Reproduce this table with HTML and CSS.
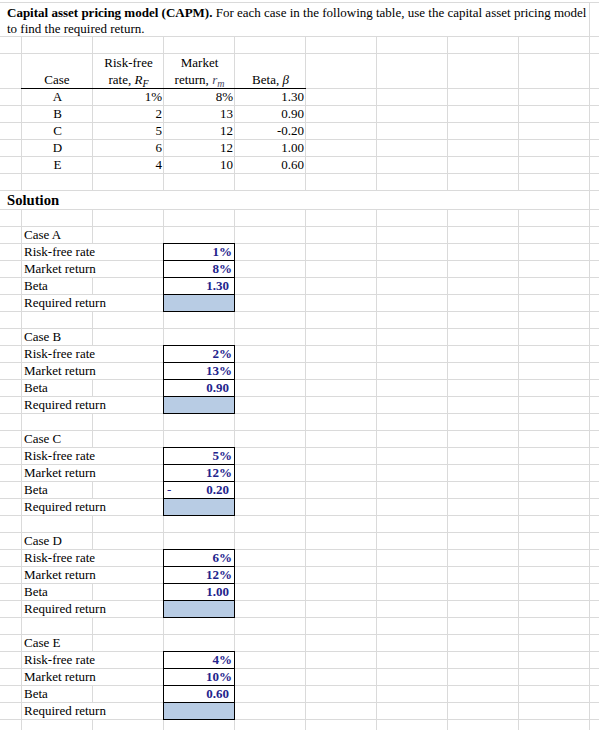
FILE: index.html
```html
<!DOCTYPE html>
<html>
<head>
<meta charset="utf-8">
<title>CAPM</title>
<link rel="stylesheet" href="styles.css">
</head>
<body>
<div class="sheet">
  <div class="row merged title">
    <div class="ttl"><b>Capital asset pricing model (CAPM).</b> For each case in the following table, use the capital asset pricing model<br>to find the required return.</div>
  </div>
  <div class="row"></div>
  <div class="row head">
    <div class="h c2 first">Case</div>
    <div class="h c3">Risk-free<br>rate, <i>R</i><sub>F</sub></div>
    <div class="h c4">Market<br>return, <i class="rm">r</i><sub class="rm">m</sub></div>
    <div class="h c5">Beta, <i>β</i></div>
  </div>
  <div class="row"><div class="d c2 ctr">A</div><div class="d c3 num">1%</div><div class="d c4 num">8%</div><div class="d c5 num">1.30</div></div>
  <div class="row"><div class="d c2 ctr">B</div><div class="d c3 num">2</div><div class="d c4 num">13</div><div class="d c5 num">0.90</div></div>
  <div class="row"><div class="d c2 ctr">C</div><div class="d c3 num">5</div><div class="d c4 num">12</div><div class="d c5 num">-0.20</div></div>
  <div class="row"><div class="d c2 ctr">D</div><div class="d c3 num">6</div><div class="d c4 num">12</div><div class="d c5 num">1.00</div></div>
  <div class="row"><div class="d c2 ctr">E</div><div class="d c3 num">4</div><div class="d c4 num">10</div><div class="d c5 num">0.60</div></div>
  <div class="row"></div>
  <div class="row merged solrow"><div class="sol">Solution</div></div>
  <div class="row"></div>

  <div class="row"><div class="lbl">Case A</div></div>
  <div class="row"><div class="lbl ov">Risk-free rate</div><div class="box">1%</div></div>
  <div class="row"><div class="lbl ov">Market return</div><div class="box">8%</div></div>
  <div class="row"><div class="lbl">Beta</div><div class="box beta">1.30</div></div>
  <div class="row"><div class="lbl ov">Required return</div><div class="box fill"></div></div>
  <div class="row"></div>

  <div class="row"><div class="lbl">Case B</div></div>
  <div class="row"><div class="lbl ov">Risk-free rate</div><div class="box">2%</div></div>
  <div class="row"><div class="lbl ov">Market return</div><div class="box">13%</div></div>
  <div class="row"><div class="lbl">Beta</div><div class="box beta">0.90</div></div>
  <div class="row"><div class="lbl ov">Required return</div><div class="box fill"></div></div>
  <div class="row"></div>

  <div class="row"><div class="lbl">Case C</div></div>
  <div class="row"><div class="lbl ov">Risk-free rate</div><div class="box">5%</div></div>
  <div class="row"><div class="lbl ov">Market return</div><div class="box">12%</div></div>
  <div class="row"><div class="lbl">Beta</div><div class="box beta neg"><span class="minus">-</span><span>0.20</span></div></div>
  <div class="row"><div class="lbl ov">Required return</div><div class="box fill"></div></div>
  <div class="row"></div>

  <div class="row"><div class="lbl">Case D</div></div>
  <div class="row"><div class="lbl ov">Risk-free rate</div><div class="box">6%</div></div>
  <div class="row"><div class="lbl ov">Market return</div><div class="box">12%</div></div>
  <div class="row"><div class="lbl">Beta</div><div class="box beta">1.00</div></div>
  <div class="row"><div class="lbl ov">Required return</div><div class="box fill"></div></div>
  <div class="row"></div>

  <div class="row"><div class="lbl">Case E</div></div>
  <div class="row"><div class="lbl ov">Risk-free rate</div><div class="box">4%</div></div>
  <div class="row"><div class="lbl ov">Market return</div><div class="box">10%</div></div>
  <div class="row"><div class="lbl">Beta</div><div class="box beta">0.60</div></div>
  <div class="row"><div class="lbl ov">Required return</div><div class="box fill"></div></div>
  <div class="row"></div>
  <div class="row"></div>
</div>
</body>
</html>
```

FILE: styles.css
```css
* { box-sizing: border-box; }
html, body { margin: 0; padding: 0; background: #fff; }
body {
  font-family: "Liberation Serif", "Times New Roman", serif;
  font-size: 13px;
  color: #000;
}
.sheet {
  width: 599px;
  margin-top: 2px;
  border-top: 1px solid #dadada;
  overflow: hidden;
}
.row {
  display: grid;
  grid-template-columns: 22px repeat(8, 71px) 1fr;
  height: 17px;
  line-height: 16px;
  border-bottom: 1px solid #dadada;
  background-image: linear-gradient(to right, transparent 70px, #dadada 70px);
  background-size: 71px 100%;
  background-position: 22px 0;
  background-repeat: repeat-x;
}
.row.merged {
  background-image: linear-gradient(#dadada, #dadada);
  background-size: 1px 100%;
  background-position: 589px 0;
  background-repeat: no-repeat;
}
.title { height: 34px; }
.ttl {
  grid-column: 1 / 10;
  padding: 2px 0 0 7px;
  line-height: 16px;
  white-space: nowrap;
}
.head { height: 35px; }
.h {
  align-self: end;
  text-align: center;
  line-height: 17px;
  border-bottom: 1px solid #000;
  margin-bottom: -1px;
}
.h.first { margin-left: -1px; }
.h i { font-style: italic; }
.h sub {
  font-size: 10px;
  font-style: italic;
  vertical-align: -3px;
  line-height: 0;
}
.rm { color: #4a4a66; }
.c2 { grid-column: 2; }
.c3 { grid-column: 3; }
.c4 { grid-column: 4; }
.c5 { grid-column: 5; }
.ctr { text-align: center; }
.num { text-align: right; padding-right: 2px; }
.solrow { height: 19px; }
.sol {
  grid-column: 1 / 10;
  padding-left: 7px;
  font-weight: bold;
  font-size: 14.67px;
  line-height: 19px;
}
.lbl {
  grid-column: 2;
  padding-left: 2px;
  white-space: nowrap;
}
.lbl.ov {
  grid-column: 2 / 4;
  background: #fff;
  margin-right: 1px;
}
.box {
  grid-column: 4;
  margin: -1px 0 -1px -1px;
  border: 1px solid #000;
  background: #fff;
  color: #23238c;
  font-weight: bold;
  text-align: right;
  padding-right: 2px;
  line-height: 16px;
}
.box.beta { padding-right: 5px; }
.box.fill { background: #b8cce4; }
.box.neg {
  display: flex;
  justify-content: space-between;
  padding-left: 3px;
}
.minus { font-weight: normal; }
```
